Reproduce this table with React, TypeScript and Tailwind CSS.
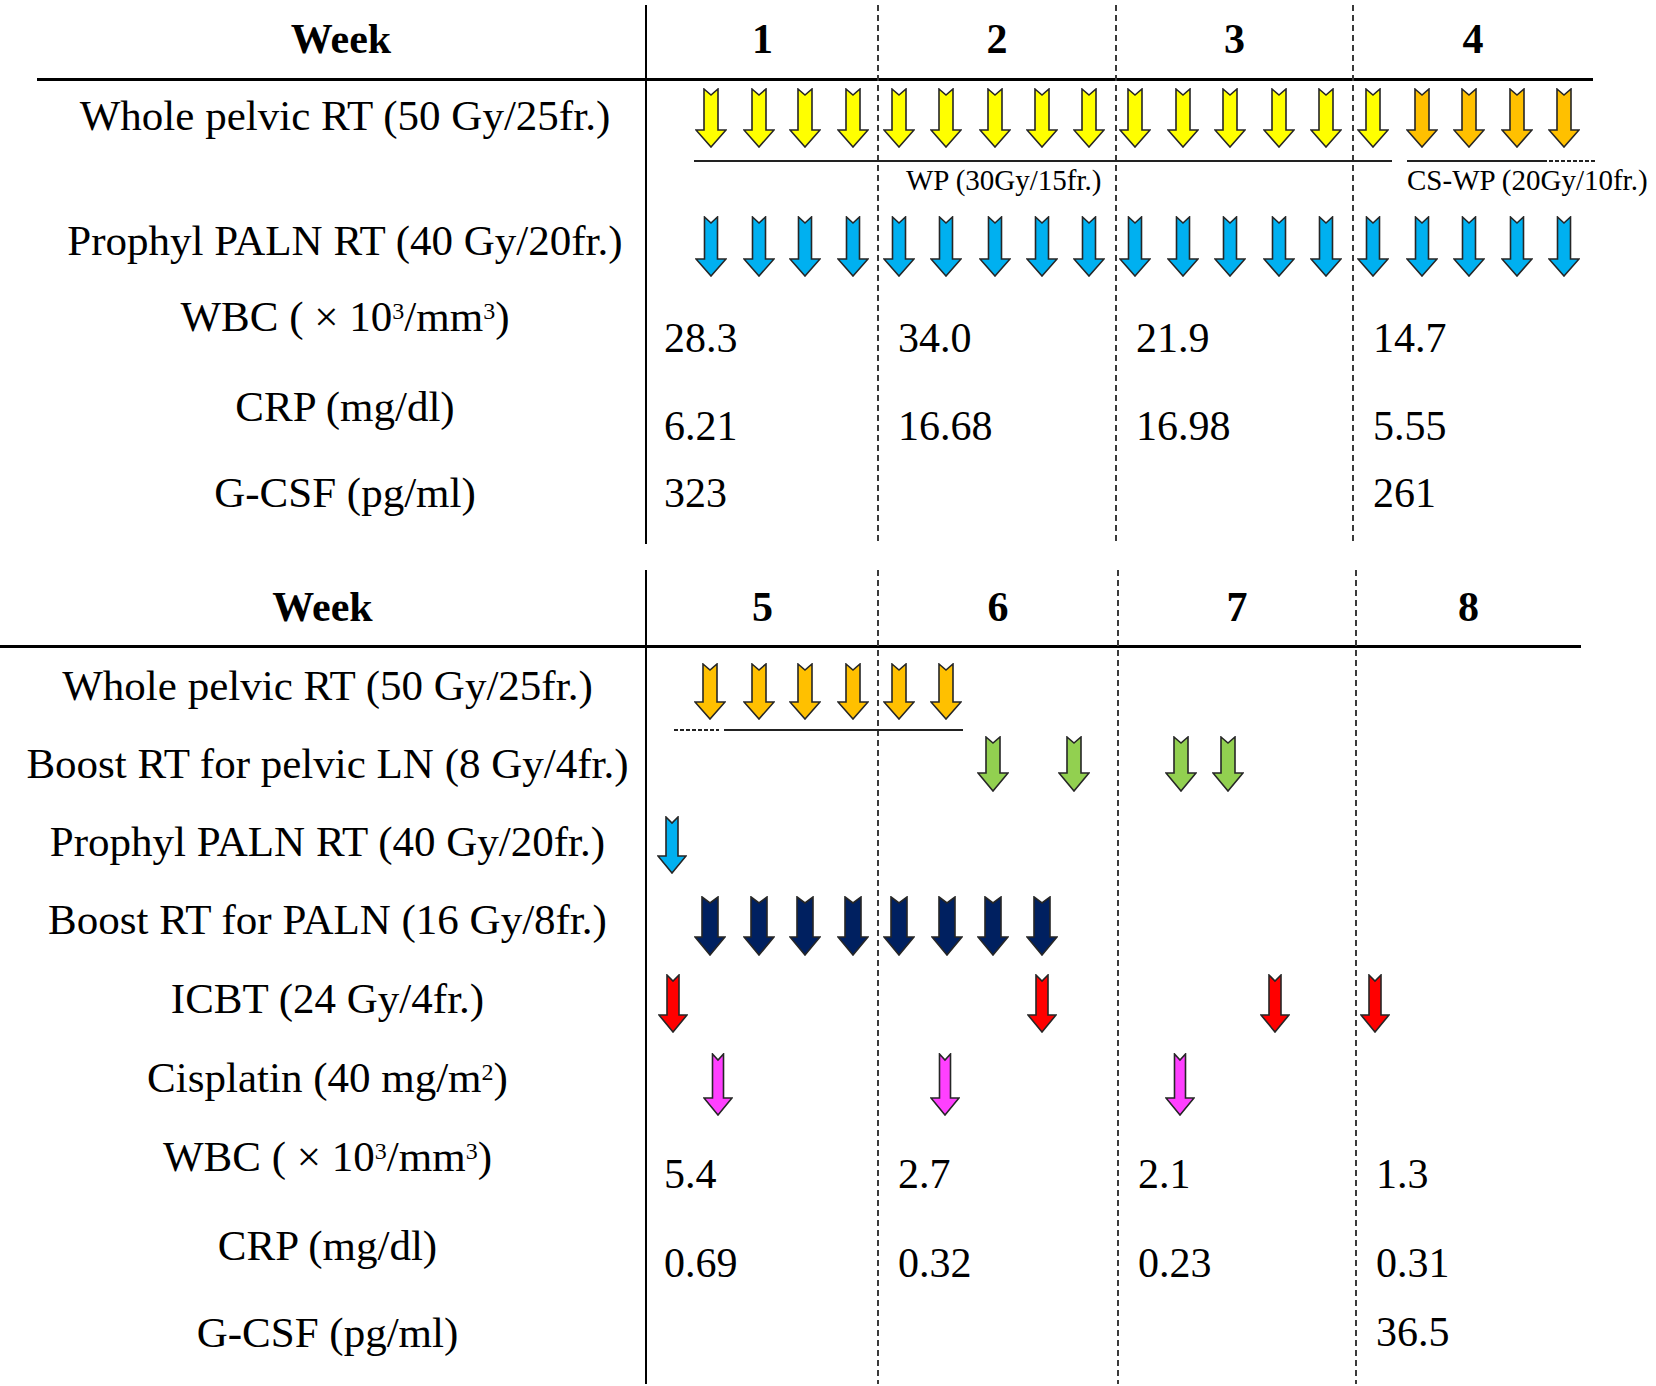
import React from "react";

type A = { x: number; c: string; w?: number; s?: number; hd?: number; h?: number };

const Y = "#FFFF00";
const O = "#FFC000";
const B = "#00B0F0";
const G = "#92D050";
const N = "#002060";
const R = "#FF0000";
const M = "#FF40FF";
const ORIGIN = 647;

function Arrow({ c, w = 32, s = 14, hd = 18, h = 60 }: A) {
  const p = 1;
  const cx = w / 2;
  const sl = cx - s / 2;
  const sr = cx + s / 2;
  const hy = h - hd;
  const notch = 6;
  const pts = [
    [sl, p],
    [cx, p + notch],
    [sr, p],
    [sr, hy],
    [w - p, hy],
    [cx, h - p],
    [p, hy],
    [sl, hy],
  ]
    .map(([x, y]) => `${x},${y}`)
    .join(" ");
  return (
    <svg width={w} height={h} viewBox={`0 0 ${w} ${h}`} className="block">
      <polygon points={pts} fill={c} stroke="#262626" strokeWidth={1.6} strokeLinejoin="miter" />
    </svg>
  );
}

function Arrows({ items, top }: { items: A[]; top: number }) {
  return (
    <>
      {items.map((a, i) => (
        <div
          key={i}
          className="absolute"
          style={{ left: a.x - ORIGIN - (a.w ?? 32) / 2, top }}
        >
          <Arrow {...a} />
        </div>
      ))}
    </>
  );
}

function HLine({ x1, x2, top, dashed }: { x1: number; x2: number; top: number; dashed?: boolean }) {
  return (
    <div
      className={
        dashed
          ? "absolute h-[2px] bg-[image:repeating-linear-gradient(to_right,#222_0px,#222_4px,transparent_4px,transparent_6px)]"
          : "absolute h-[2px] bg-[#222]"
      }
      style={{ left: x1 - ORIGIN, width: x2 - x1, top }}
    />
  );
}

const Dash = () => (
  <div className="w-[2px] h-full bg-[image:repeating-linear-gradient(to_bottom,#3a3a3a_0px,#3a3a3a_6px,transparent_6px,transparent_10px)]" />
);

const Sup = ({ children }: { children: React.ReactNode }) => (
  <sup className="text-[24px]">{children}</sup>
);

const WBC = (
  <>
    WBC ( × 10<Sup>3</Sup>/mm<Sup>3</Sup>)
  </>
);

type Row = { h: string; pt: string; label: React.ReactNode; content?: React.ReactNode };

function ValueCells({ vals, pt, cols }: { vals: string[]; pt: string; cols: string[] }) {
  return (
    <div className={"flex text-[42px] leading-[46px] " + pt}>
      {vals.map((v, i) => (
        <div key={i} className={cols[i] + (i === 0 ? " pl-[17px]" : " pl-[20px]")}>
          {v}
        </div>
      ))}
    </div>
  );
}

function Section({
  leftClass,
  labelPad,
  rightClass,
  headerH,
  headerPt,
  weeks,
  cols,
  dashCols,
  rows,
}: {
  leftClass: string;
  labelPad: string;
  rightClass: string;
  headerH: string;
  headerPt: string;
  weeks: string[];
  cols: string[];
  dashCols: string[];
  rows: Row[];
}) {
  return (
    <div className="flex">
      <div className="w-[645px] flex flex-col">
        <div
          className={
            "border-b-[3px] border-black text-center font-bold text-[42px] leading-[46px] " +
            leftClass +
            " " +
            headerH +
            " " +
            headerPt
          }
        >
          Week
        </div>
        {rows.map((r, i) => (
          <div
            key={i}
            className={"text-center text-[43px] leading-[46px] whitespace-nowrap " + labelPad + " " + r.h + " " + r.pt}
          >
            {r.label}
          </div>
        ))}
      </div>
      <div className={"relative border-l-2 border-black flex flex-col " + rightClass}>
        <div className="absolute inset-0 flex pointer-events-none">
          <div className={dashCols[0]} />
          <Dash />
          <div className={dashCols[1]} />
          <Dash />
          <div className={dashCols[2]} />
          <Dash />
        </div>
        <div className={"flex border-b-[3px] border-black font-bold text-[42px] leading-[46px] " + headerH + " " + headerPt}>
          {weeks.map((w, i) => (
            <div key={i} className={"text-center " + cols[i]}>
              {w}
            </div>
          ))}
        </div>
        {rows.map((r, i) => (
          <div key={i} className={"relative " + r.h}>
            {r.content}
          </div>
        ))}
      </div>
    </div>
  );
}

const topSlots = [711, 759, 805, 853, 899, 946, 995, 1042, 1089, 1135, 1183, 1230, 1279, 1326, 1373, 1422, 1469, 1517, 1564];

export default function App() {
  const topCols = ["w-[231px]", "w-[238px]", "w-[237px]", "flex-1"];
  const botCols = ["w-[231px]", "w-[240px]", "w-[238px]", "flex-1"];

  const topRows: Row[] = [
    {
      h: "h-[119px]",
      pt: "pt-[12px]",
      label: "Whole pelvic RT (50 Gy/25fr.)",
      content: (
        <>
          <Arrows top={7} items={topSlots.map((x, i) => ({ x, c: i < 15 ? Y : O }))} />
          <HLine x1={694} x2={1392} top={79} />
          <HLine x1={1407} x2={1547} top={79} />
          <HLine x1={1549} x2={1595} top={79} dashed />
          <div className="absolute left-[259px] top-[83px] text-[29px] leading-[32px] whitespace-nowrap">
            WP (30Gy/15fr.)
          </div>
          <div className="absolute left-[760px] top-[83px] text-[29px] leading-[32px] whitespace-nowrap">
            CS-WP (20Gy/10fr.)
          </div>
        </>
      ),
    },
    {
      h: "h-[80px]",
      pt: "pt-[18px]",
      label: "Prophyl PALN RT (40 Gy/20fr.)",
      content: <Arrows top={16} items={topSlots.map((x) => ({ x, c: B, s: 13, h: 61 }))} />,
    },
    {
      h: "h-[90px]",
      pt: "pt-[14px]",
      label: WBC,
      content: <ValueCells vals={["28.3", "34.0", "21.9", "14.7"]} pt="pt-[35px]" cols={topCols} />,
    },
    {
      h: "h-[85px]",
      pt: "pt-[14px]",
      label: "CRP (mg/dl)",
      content: <ValueCells vals={["6.21", "16.68", "16.98", "5.55"]} pt="pt-[33px]" cols={topCols} />,
    },
    {
      h: "h-[89px]",
      pt: "pt-[15px]",
      label: "G-CSF (pg/ml)",
      content: <ValueCells vals={["323", "", "", "261"]} pt="pt-[15px]" cols={topCols} />,
    },
  ];

  const botRows: Row[] = [
    {
      h: "h-[85px]",
      pt: "pt-[15px]",
      label: "Whole pelvic RT (50 Gy/25fr.)",
      content: (
        <>
          <Arrows top={15} items={[710, 759, 805, 853, 899, 946].map((x) => ({ x, c: O, h: 57 }))} />
          <HLine x1={674} x2={719} top={81} dashed />
          <HLine x1={724} x2={963} top={81} />
        </>
      ),
    },
    {
      h: "h-[72px]",
      pt: "pt-[8px]",
      label: "Boost RT for pelvic LN (8 Gy/4fr.)",
      content: <Arrows top={3} items={[993, 1074, 1181, 1228].map((x) => ({ x, c: G, h: 56, hd: 19 }))} />,
    },
    {
      h: "h-[77px]",
      pt: "pt-[14px]",
      label: "Prophyl PALN RT (40 Gy/20fr.)",
      content: <Arrows top={11} items={[{ x: 672, c: B, w: 30, s: 12, h: 58 }]} />,
    },
    {
      h: "h-[80px]",
      pt: "pt-[15px]",
      label: "Boost RT for PALN (16 Gy/8fr.)",
      content: (
        <Arrows
          top={14}
          items={[710, 759, 805, 853, 899, 947, 993, 1042].map((x) => ({ x, c: N, s: 16, h: 60, hd: 19 }))}
        />
      ),
    },
    {
      h: "h-[80px]",
      pt: "pt-[14px]",
      label: "ICBT (24 Gy/4fr.)",
      content: <Arrows top={12} items={[673, 1042, 1275, 1375].map((x) => ({ x, c: R, w: 30, s: 12, h: 59 }))} />,
    },
    {
      h: "h-[80px]",
      pt: "pt-[13px]",
      label: (
        <>
          Cisplatin (40 mg/m<Sup>2</Sup>)
        </>
      ),
      content: <Arrows top={11} items={[718, 945, 1180].map((x) => ({ x, c: M, w: 30, s: 11, h: 63 }))} />,
    },
    {
      h: "h-[88px]",
      pt: "pt-[12px]",
      label: WBC,
      content: <ValueCells vals={["5.4", "2.7", "2.1", "1.3"]} pt="pt-[29px]" cols={botCols} />,
    },
    {
      h: "h-[85px]",
      pt: "pt-[13px]",
      label: "CRP (mg/dl)",
      content: <ValueCells vals={["0.69", "0.32", "0.23", "0.31"]} pt="pt-[30px]" cols={botCols} />,
    },
    {
      h: "h-[89px]",
      pt: "pt-[15px]",
      label: "G-CSF (pg/ml)",
      content: <ValueCells vals={["", "", "", "36.5"]} pt="pt-[14px]" cols={botCols} />,
    },
  ];

  return (
    <div className="w-[1656px] h-[1386px] bg-white text-black overflow-hidden font-['Liberation_Serif','Times_New_Roman',serif]">
      <div className="pt-[5px]">
        <Section
          leftClass="ml-[37px]"
          labelPad="pl-[45px]"
          rightClass="w-[948px]"
          headerH="h-[76px]"
          headerPt="pt-[11px]"
          weeks={["1", "2", "3", "4"]}
          cols={topCols}
          dashCols={["w-[230px]", "w-[236px]", "w-[235px]"]}
          rows={topRows}
        />
      </div>
      <div className="pt-[26px]">
        <Section
          leftClass="ml-0"
          labelPad="pl-[10px]"
          rightClass="w-[936px]"
          headerH="h-[78px]"
          headerPt="pt-[14px]"
          weeks={["5", "6", "7", "8"]}
          cols={botCols}
          dashCols={["w-[230px]", "w-[238px]", "w-[236px]"]}
          rows={botRows}
        />
      </div>
    </div>
  );
}
